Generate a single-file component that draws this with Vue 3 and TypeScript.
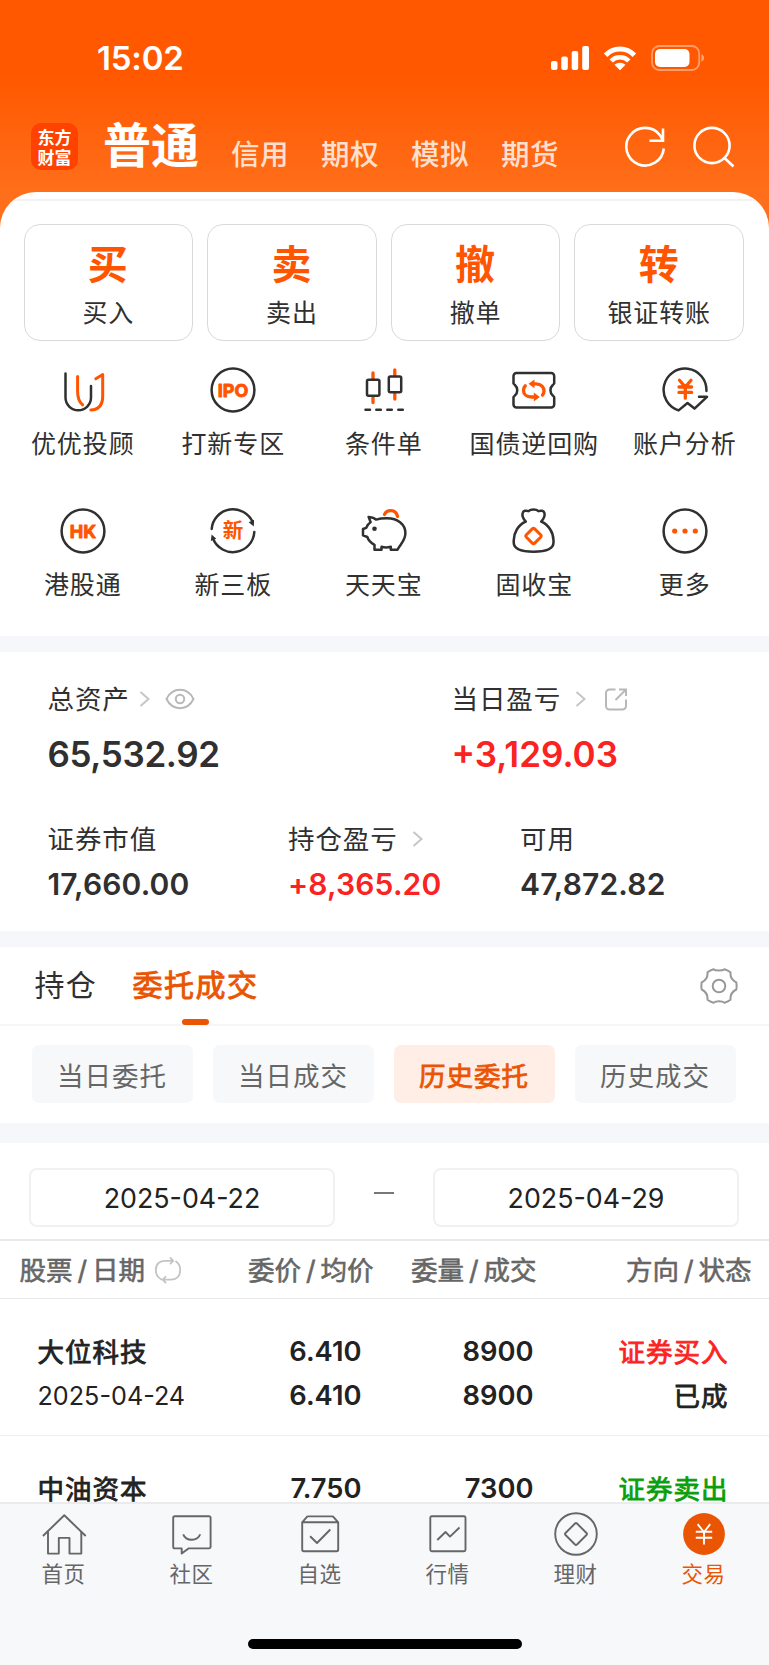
<script setup lang="ts">
type Tone = 'ink' | 'hot' | 'hotfill' | 'inkfill' | 'bold'
interface Shape { d: string; tone: Tone }
interface Tool { label: string; shapes: Shape[]; text?: string; textClass?: string }
interface Tab { label: string; shapes: string[]; active?: boolean }
interface Order {
  name: string; date?: string; price: string; avg?: string
  qty: string; filled?: string; side: string; status?: string; tone: 'buy' | 'sell'
}

const ring = 'M24 2.6a21.4 21.4 0 1 1 0 42.8a21.4 21.4 0 1 1 0-42.8z'

const markets: string[] = ['信用', '期权', '模拟', '期货']

const actions = [
  { mark: '买', label: '买入' },
  { mark: '卖', label: '卖出' },
  { mark: '撤', label: '撤单' },
  { mark: '转', label: '银证转账' },
]

const tools: Tool[] = [
  {
    label: '优优投顾',
    shapes: [
      { d: 'M6.5 7.5V31.5A12.7 12.7 0 0 0 32 31.5V20', tone: 'ink' },
      { d: 'M18.6 10.5V25C18.6 32 20 36 23.6 38.8', tone: 'hot' },
      { d: 'M36.8 12.8L43.7 8.5V30C43.7 39 40 43.8 31.8 44', tone: 'hot' },
    ],
  },
  { label: '打新专区', shapes: [{ d: ring, tone: 'ink' }], text: 'IPO', textClass: 'latin' },
  {
    label: '条件单',
    shapes: [
      { d: 'M13 7V13M13 31V36.5M34.8 3.8V9.5M34.8 27V33', tone: 'bold' },
      { d: 'M8.5 13.8H17.9A1.5 1.5 0 0 1 19.4 15.3V28.2A1.5 1.5 0 0 1 17.9 29.7H8.5A1.5 1.5 0 0 1 7 28.2V15.3A1.5 1.5 0 0 1 8.5 13.8Z', tone: 'ink' },
      { d: 'M30.3 10.4H39.7A1.5 1.5 0 0 1 41.2 11.9V24.8A1.5 1.5 0 0 1 39.7 26.3H30.3A1.5 1.5 0 0 1 28.8 24.8V11.9A1.5 1.5 0 0 1 30.3 10.4Z', tone: 'ink' },
      { d: 'M5.5 43.8H10M16.3 43.8H20.8M27.3 43.8H31.8M38.3 43.8H42.8', tone: 'ink' },
    ],
  },
  {
    label: '国债逆回购',
    shapes: [
      { d: 'M6.5 7H41.2A3 3 0 0 1 44.2 10V17.5L42.8 19A7 7 0 0 0 42.8 29.5L44.2 31V38.5A3 3 0 0 1 41.2 41.5H6.5A3 3 0 0 1 3.5 38.5V31L4.9 29.5A7 7 0 0 0 4.9 19L3.5 17.5V10A3 3 0 0 1 6.5 7Z', tone: 'ink' },
      { d: 'M22 17.8H26C31.5 17.8 34 21.5 34 24.8C34 26.5 33.5 28 32.5 29M26 31H21.5C16.5 31 13.5 28 13.5 24.5C13.5 22.5 14 21 15.3 19.8', tone: 'bold' },
      { d: 'M18.5 17.8L24.5 13.4V22.2ZM29.8 31L23.8 26.6V35.4Z', tone: 'hotfill' },
    ],
  },
  {
    label: '账户分析',
    shapes: [
      { d: 'M45.4 25A21.4 21.4 0 1 0 17.6 44.4L26.5 37L33.5 42.6L46 30.8H38', tone: 'ink' },
      { d: 'M18.5 14.2L24.3 21L30 14.2M24.3 21V32.2M18 21H30.6M18 26.4H30.6', tone: 'bold' },
    ],
  },
  { label: '港股通', shapes: [{ d: ring, tone: 'ink' }], text: 'HK', textClass: 'latin' },
  {
    label: '新三板',
    shapes: [
      { d: 'M2.7 22A21.4 21.4 0 0 1 43.8 15.5M45.3 25A21.4 21.4 0 0 1 4.2 32', tone: 'ink' },
      { d: 'M39.7 15.2L45 12.8L44.8 19.5ZM7.3 31.8L1.8 34L2.6 27.5Z', tone: 'inkfill' },
    ],
    text: '新', textClass: 'han',
  },
  {
    label: '天天宝',
    shapes: [
      { d: 'M8.6 9.9C11 10.2 14 10.5 16 12.6C20 11.3 23 11.2 27 11.2C38 11.2 45.4 17.5 45.4 26C45.4 34 40 37.5 37.5 42.7H30.8V39.8C27.5 40.8 24.5 40.8 21.5 39.8V42.7H14.5V37.8C11 36 8.5 33.5 7.3 30L3 28.3V22L6.2 20.8C7 18 8.5 16.5 10.6 15.2Z', tone: 'ink' },
      { d: 'M24.5 7.5C26.5 2.5 35.8 1.5 37.6 9.5', tone: 'bold' },
      { d: 'M14.5 19.4a2.3 2.3 0 1 1 0 4.6a2.3 2.3 0 1 1 0-4.6z', tone: 'inkfill' },
    ],
  },
  {
    label: '固收宝',
    shapes: [
      { d: 'M15.8 14.5C8 18 3.7 26 3.7 33.5V35.5C3.7 42 10 44.7 23.5 44.7S43.5 42 43.5 35.5V33.5C43.5 26 39 18 31.2 14.5C34 11.5 35 8 34.4 5.8C33.7 3.7 31 3.2 28.5 4.2C26.5 1.9 20.5 1.9 18.5 4.2C16 3.2 13.3 3.7 12.7 5.8C12 8 13 11.5 15.8 14.5Z', tone: 'ink' },
      { d: 'M22.3 21.9Q23.5 20.8 24.7 21.9L30.6 27.8Q31.7 29 30.6 30.2L24.7 36.1Q23.5 37.2 22.3 36.1L16.4 30.2Q15.3 29 16.4 27.8Z', tone: 'hot' },
    ],
  },
  {
    label: '更多',
    shapes: [
      { d: ring, tone: 'ink' },
      { d: 'M13.7 21.4a2.6 2.6 0 1 1 0 5.2a2.6 2.6 0 1 1 0-5.2zM24 21.4a2.6 2.6 0 1 1 0 5.2a2.6 2.6 0 1 1 0-5.2zM34.3 21.4a2.6 2.6 0 1 1 0 5.2a2.6 2.6 0 1 1 0-5.2z', tone: 'hotfill' },
    ],
  },
]

const views = [
  { label: '当日委托', on: false },
  { label: '当日成交', on: false },
  { label: '历史委托', on: true },
  { label: '历史成交', on: false },
]

const headings: [string, string][] = [['股票', '日期'], ['委价', '均价'], ['委量', '成交'], ['方向', '状态']]

const orders: Order[] = [
  { name: '大位科技', date: '2025-04-24', price: '6.410', avg: '6.410', qty: '8900', filled: '8900', side: '证券买入', status: '已成', tone: 'buy' },
  { name: '中油资本', price: '7.750', qty: '7300', side: '证券卖出', tone: 'sell' },
]

const tabs: Tab[] = [
  { label: '首页', shapes: ['M2.9 26L24.3 5.3L45.7 26', 'M8 21.5V43.6H18.8V27.9H29.5V43.6H41.3V21.5'] },
  { label: '社区', shapes: ['M6.8 6.2H41A1.6 1.6 0 0 1 42.6 7.8V36.8A1.6 1.6 0 0 1 41 38.4H20.5L13.7 43.6V38.4H6.8A1.6 1.6 0 0 1 5.2 36.8V7.8A1.6 1.6 0 0 1 6.8 6.2Z', 'M15.2 24.3C18 31.5 29.6 31.5 32.2 24.3'] },
  { label: '自选', shapes: ['M6.2 12.3H42.2V39.5A1.7 1.7 0 0 1 40.5 41.2H7.9A1.7 1.7 0 0 1 6.2 39.5ZL10.5 7.3Q11 6.4 12.2 6.4H36Q37.2 6.4 37.8 7.3L42.2 12.3', 'M14.1 26.2L21 33L34.3 19.5'] },
  { label: '行情', shapes: ['M7.8 6.3H40A1.5 1.5 0 0 1 41.5 7.8V39.8A1.5 1.5 0 0 1 40 41.3H7.8A1.5 1.5 0 0 1 6.3 39.8V7.8A1.5 1.5 0 0 1 7.8 6.3Z', 'M13.3 30L21.5 22L26 26.6L35.5 17.5'] },
  { label: '理财', shapes: ['M24 3.2a20.8 20.8 0 1 1 0 41.6a20.8 20.8 0 1 1 0-41.6z', 'M23 13.5Q24 12.6 25 13.5L34.5 23Q35.4 24 34.5 25L25 34.5Q24 35.4 23 34.5L13.5 25Q12.6 24 13.5 23Z'] },
  { label: '交易', shapes: ['M17.6 14.2L24 22L30.2 14.2M24 22V34.6M15.8 21.8H32.2M15.8 27.7H32.2'], active: true },
]
</script>

<template>
  <div class="app">
    <header>
      <div class="status">
        <span class="clock">15:02</span>
        <div class="signals">
          <svg class="bars" width="38" height="24" viewBox="0 0 38 24">
            <rect x="0" y="15" width="6.5" height="9" rx="2" />
            <rect x="10.3" y="10.5" width="6.5" height="13.5" rx="2" />
            <rect x="20.7" y="5" width="6.5" height="19" rx="2" />
            <rect x="31.2" y="0" width="6.8" height="24" rx="2" />
          </svg>
          <svg class="wifi" width="34" height="24" viewBox="0 0 34 24">
            <path d="M2.6 9.3C10.5 1 23.5 1 31.4 9.3" stroke-width="5" />
            <path d="M8.2 15C13 10 21 10 25.8 15" stroke-width="4.6" />
            <path class="dot" d="M11.5 18.800C14.5 16 19.5 16 22.5 18.8L17 24.3Z" />
          </svg>
          <svg class="battery" width="54" height="26" viewBox="0 0 54 26">
            <rect class="shell" x="1" y="1" width="47.2" height="24" rx="7.5" />
            <rect x="4" y="4" width="34.5" height="18" rx="5" />
            <path class="nub" d="M50.3 9.3C54 10.5 54 15.5 50.3 16.7Z" />
          </svg>
        </div>
      </div>
      <nav class="markets">
        <div class="logo"><span>东方</span><span>财富</span></div>
        <strong>普通</strong>
        <span v-for="m in markets" :key="m" class="market">{{ m }}</span>
        <svg class="head-icons" width="112" height="48" viewBox="0 0 112 48">
          <path d="M40.8 25.5A18.8 18.8 0 1 1 37.2 12.5L40 17.2M26.5 17.7H40V5.5" />
          <circle cx="89" cy="22.5" r="17.6" />
          <path d="M101.5 35L110.5 43.5" />
        </svg>
      </nav>
    </header>

    <main>
      <div class="seam"></div>
      <section class="actions">
        <button v-for="a in actions" :key="a.mark" type="button">
          <b>{{ a.mark }}</b><span>{{ a.label }}</span>
        </button>
      </section>

      <section class="tools">
        <div v-for="t in tools" :key="t.label" class="tool">
          <svg width="48" height="48" viewBox="0 0 48 48">
            <path v-for="(s, i) in t.shapes" :key="i" :d="s.d" :class="s.tone" />
            <text v-if="t.text" x="24" :y="t.textClass === 'han' ? 31.4 : 30.7" :class="t.textClass">{{ t.text }}</text>
          </svg>
          <span>{{ t.label }}</span>
        </div>
      </section>

      <section class="assets">
        <div class="pair big">
          <div>
            <div class="label">总资产
              <svg class="chev" width="12" height="18" viewBox="0 0 12 18"><path d="M1.5 2L9.5 9L1.5 16" /></svg>
              <svg class="eye" width="30" height="22" viewBox="0 0 30 22">
                <path d="M1.5 11C7.5-1.2 22.5-1.2 28.5 11C22.5 23.2 7.5 23.2 1.5 11Z" /><circle cx="15" cy="11" r="4.2" />
              </svg>
            </div>
            <div class="value total">65,532.92</div>
          </div>
          <div>
            <div class="label">当日盈亏
              <svg class="chev wide" width="12" height="18" viewBox="0 0 12 18"><path d="M1.5 2L9.5 9L1.5 16" /></svg>
              <svg class="share" width="24" height="24" viewBox="0 0 24 24">
                <path d="M11.5 2.5H5.5A3.5 3.5 0 0 0 2 6V19A3.5 3.5 0 0 0 5.5 22.5H18.5A3.5 3.5 0 0 0 22 19V12.5M15 2.5H22V9M22 2.5L11.5 13" />
              </svg>
            </div>
            <div class="value rise">+3,129.03</div>
          </div>
        </div>
        <div class="pair small">
          <div><div class="label">证券市值</div><div class="value">17,660.00</div></div>
          <div>
            <div class="label">持仓盈亏
              <svg class="chev wide" width="12" height="18" viewBox="0 0 12 18"><path d="M1.5 2L9.5 9L1.5 16" /></svg>
            </div>
            <div class="value rise">+8,365.20</div>
          </div>
          <div><div class="label">可用</div><div class="value">47,872.82</div></div>
        </div>
      </section>

      <section class="book">
        <div class="book-tabs">
          <span class="plain">持仓</span>
          <span class="chosen">委托成交</span>
          <svg class="gear" width="38" height="38" viewBox="0 0 38 38">
            <path d="M19 3.6C21.5 3.6 23.5 3.2 24.5 2.2Q28.2 3.4 30.5 5.2C30 10.2 31.8 13.2 36.3 15.5Q37 19 36.3 22.5C31.8 24.8 30 27.8 30.5 32.8Q28.2 34.6 24.5 35.8C22 33.6 16 33.6 13.5 35.8Q9.8 34.6 7.5 32.8C8 27.8 6.2 24.8 1.7 22.5Q1 19 1.7 15.5C6.2 13.2 8 10.2 7.5 5.2Q9.8 3.4 13.5 2.2C14.5 3.2 16.5 3.6 19 3.6Z" />
            <circle cx="19" cy="19" r="6.3" />
          </svg>
        </div>
        <div class="views">
          <button v-for="v in views" :key="v.label" type="button" :class="{ on: v.on }">{{ v.label }}</button>
        </div>
      </section>

      <section class="history">
        <div class="range">
          <div class="date">2025-04-22</div><i></i><div class="date">2025-04-29</div>
        </div>
        <div class="heads">
          <div v-for="(h, i) in headings" :key="h[0]">
            {{ h[0] }}<em>/</em>{{ h[1] }}
            <svg v-if="i === 0" width="28" height="28" viewBox="0 0 28 28">
              <path d="M7.5 23.5C3.5 21.5 1.8 18 1.8 14C1.8 7.5 6 4.8 11 4.8H18M16.5 2L19.3 4.8L16.5 7.6M22 5.5C25 7.5 26.2 10.5 26.2 14C26.2 20.5 22 23.7 17 23.7H9.5M11.5 20.8L8.7 23.7L11.5 26.5" />
            </svg>
          </div>
        </div>
        <div v-for="o in orders" :key="o.name" class="order">
          <div><b class="cjk">{{ o.name }}</b><span v-if="o.date" class="day">{{ o.date }}</span></div>
          <div><b>{{ o.price }}</b><b v-if="o.avg">{{ o.avg }}</b></div>
          <div><b>{{ o.qty }}</b><b v-if="o.filled">{{ o.filled }}</b></div>
          <div><b class="cjk" :class="o.tone">{{ o.side }}</b><b v-if="o.status" class="cjk">{{ o.status }}</b></div>
        </div>
      </section>
    </main>

    <footer>
      <div class="tabs">
        <div v-for="t in tabs" :key="t.label" class="tab" :class="{ active: t.active }">
          <svg width="48" height="48" viewBox="0 0 48 48">
            <circle v-if="t.active" cx="24" cy="24" r="20.9" class="disc" />
            <path v-for="d in t.shapes" :key="d" :d="d" />
          </svg>
          <span>{{ t.label }}</span>
        </div>
      </div>
      <div class="home-bar"></div>
    </footer>
  </div>
</template>

<style>
body { margin: 0; }
</style>

<style scoped>
.app {
  width: 769px; height: 1665px; overflow: hidden; box-sizing: border-box;
  display: flex; flex-direction: column;
  font-family: Inter, "Noto Sans CJK SC", sans-serif; color: #303030;
  background: linear-gradient(#ff5800 0, #ff5800 75px, #ff6e1a 190px, #ff6e1a 240px, #fff 240px);
}
svg { display: block; flex: none; fill: none; stroke-linecap: round; stroke-linejoin: round; }
button { font: inherit; padding: 0; margin: 0; border: 0; box-sizing: border-box; }
header { height: 191.5px; flex: none; }
.status { height: 115px; display: flex; align-items: center; justify-content: space-between; padding: 0 64.5px 0 97px; box-sizing: border-box; }
.clock { font-size: 33px; font-weight: 600; color: #fff; line-height: 40px; letter-spacing: -.2px; }
.signals { display: flex; align-items: center; }
.signals svg { fill: #fff; }
.wifi { margin: 0 14px; }
.signals .wifi path { fill: none; stroke: #fff; stroke-linecap: butt; }
.signals .wifi .dot { fill: #fff; stroke: none; }
.battery .shell { fill: none; stroke: #fff; stroke-opacity: .42; stroke-width: 1.8; }
.battery .nub { fill-opacity: .45; }

.markets { height: 76px; display: flex; padding-left: 31px; color: #fff; }
.logo {
  width: 47px; height: 47px; margin-top: 8px; border-radius: 10px; background: #ff4200;
  display: flex; flex-direction: column; align-items: center; justify-content: center;
  font: 700 17px/20px "Noto Sans CJK SC", sans-serif;
}
.markets strong { font-size: 48px; line-height: 60px; margin: 1px 32px 0 25px; font-weight: 700; width: 96px; }
.market { width: 90px; font-size: 28.5px; line-height: 40px; padding-top: 20px; color: #ffe0d0; font-weight: 500; letter-spacing: .5px; }
.head-icons { margin: 8px 0 0 32px; stroke: #fff; stroke-width: 2.6; stroke-linecap: butt; stroke-linejoin: miter; }

main { flex: 1; min-height: 0; overflow: hidden; background: #fff; border-radius: 36px 36px 0 0; }
.seam { height: 2px; margin-top: 7.5px; background: #f2f2f2; }
.actions { display: flex; gap: 14px; padding: 23px 25px 0 23.5px; }
.actions button {
  flex: 1; height: 117px; border: 1px solid #d9d9d9; border-radius: 16px; background: #fff;
  display: flex; flex-direction: column; align-items: center; color: #303030;
}
.actions b { font-size: 40px; line-height: 44px; margin: 18px 1px 0 0; color: #ff5500; font-weight: 700; }
.actions span { font-size: 25px; line-height: 30px; margin-top: 11px; letter-spacing: .9px; }

.tools { display: grid; grid-template-columns: repeat(5, 150.5px); grid-auto-rows: 141px; padding: 25px 7.5px 0; height: 295px; box-sizing: border-box; }
.tool { display: flex; flex-direction: column; align-items: center; }
.tool span { font-size: 25px; line-height: 30px; margin-top: 15px; letter-spacing: .9px; white-space: nowrap; }
.ink { stroke: #303030; stroke-width: 2.5; }
.hot { stroke: #ff5500; stroke-width: 3; }
.bold { stroke: #ff5500; stroke-width: 3.3; }
.hotfill { fill: #ff5500; }
.inkfill { fill: #303030; }
.tool text { fill: #ff5500; text-anchor: middle; }
.tool .latin { font: 700 18px Inter, sans-serif; stroke: #ff5500; stroke-width: .9; }
.tool .han { font: 700 20.5px "Noto Sans CJK SC", sans-serif; }

.assets { border-top: 16px solid #f5f7fa; height: 295px; box-sizing: border-box; padding: 30px 0 0 47.5px; }
.pair { display: flex; }
.label { display: flex; align-items: center; font-size: 26.5px; line-height: 34px; letter-spacing: .9px; }
.chev { margin-left: 9px; stroke: #c6c6c6; stroke-width: 2; stroke-linecap: butt; stroke-linejoin: miter; }
.chev.wide { margin-left: 14px; }
.eye { margin-left: 14px; stroke: #b8b8b8; stroke-width: 2; }
.share { margin-left: 17px; stroke: #b8b8b8; stroke-width: 2; stroke-linecap: butt; stroke-linejoin: miter; }
.value { font-weight: 600; white-space: nowrap; }
.rise { color: #fb2222; }
.big > div { width: 404px; flex: none; }
.big .value { font-size: 35px; line-height: 42px; margin-top: 17px; }
.big .total { letter-spacing: -.35px; }
.small { margin-top: 47px; }
.small .value { font-size: 30px; line-height: 36px; margin-top: 10px; letter-spacing: .15px; }
.small > div { width: 240.5px; flex: none; }
.small > div:nth-child(2) { width: 232px; }

.book { border-top: 16px solid #f5f7fa; height: 192px; box-sizing: border-box; }
.book-tabs { height: 79px; box-sizing: border-box; display: flex; align-items: center; padding: 0 31px 0 34.5px; border-bottom: 2px solid #f6f6f6; font-size: 30px; letter-spacing: 1.2px; }
.chosen { margin-left: 35.5px; height: 79px; line-height: 78px; position: relative; color: #ea5504; -webkit-text-stroke: .9px; letter-spacing: 1.5px; }
.plain { line-height: 78px; height: 79px; }
.chosen::after { content: ""; position: absolute; left: 50%; bottom: 0; width: 27px; height: 6px; margin-left: -13.5px; border-radius: 3px; background: #ea5504; }
.gear { margin-left: auto; stroke: #999; stroke-width: 2; }
.views { display: flex; gap: 20px; padding: 19px 33px 0 32px; }
.views button { flex: 1; height: 58px; border-radius: 7px; background: #f7f8fa; color: #666; font-size: 26.5px; letter-spacing: 1px; padding-right: 1px; }
.views .on { background: #ffeee5; color: #ea5504; -webkit-text-stroke: .8px; }

.history { border-top: 20px solid #f5f7fa; }
.range { height: 98px; box-sizing: border-box; padding: 25px 30px 0 29px; display: flex; justify-content: space-between; border-bottom: 2px solid #e8e8e8; }
.date { width: 306px; height: 59px; box-sizing: border-box; border: 2px solid #f1f1f1; border-radius: 8px; text-align: center; font-size: 26.8px; line-height: 56px; color: #222; }
.range i { width: 20px; height: 2px; margin-top: 24px; background: #777; }
.heads { height: 58px; box-sizing: border-box; border-bottom: 1px solid #e8e8e8; display: grid; grid-template-columns: 200px 154px 163px 215px; padding-left: 19.5px; align-items: center; font-size: 26.5px; line-height: 40px; color: #666; -webkit-text-stroke: .6px; white-space: nowrap; }
.heads div { display: flex; align-items: center; justify-content: flex-end; }
.heads div:first-child { justify-content: flex-start; }
.heads em { font-style: normal; width: 19.5px; text-align: center; }
.heads svg { margin-left: 9px; stroke: #c4c4c4; stroke-width: 1.8; }
.order { height: 137px; box-sizing: border-box; padding: 31px 0 0 37.5px; border-bottom: 1px solid #efefef; display: grid; grid-template-columns: 200px 124px 172px 194px; font-size: 27.3px; color: #222; }
.order div { display: flex; flex-direction: column; align-items: flex-end; }
.order div:first-child { align-items: flex-start; }
.order b, .day { line-height: 44px; height: 44px; font-weight: 600; white-space: nowrap; }
.order .cjk { font-size: 26.5px; font-weight: 400; letter-spacing: 1px; margin-right: -1px; -webkit-text-stroke: .8px; }
.order .day { font-weight: 400; font-size: 25.2px; }
.order .buy { color: #fb2222; }
.order .sell { color: #0a9e0a; }

footer { height: 163px; flex: none; box-sizing: border-box; border-top: 2px solid #ebebee; background: #f7f8fa; }
.tabs { display: flex; padding: 6px 0 0; }
.tab { width: 128px; display: flex; flex-direction: column; align-items: center; color: #666; }
.tab svg { stroke: #666; stroke-width: 1.9; stroke-linecap: butt; }
.tab.active svg { stroke: #fff; }
.tab .disc { fill: #ea5504; stroke: none; }
.tab span { font-size: 21.5px; line-height: 28px; margin: 2px 1px 0 0; letter-spacing: .4px; }
.tab.active { color: #ea5504; }
.home-bar { width: 274px; height: 10px; border-radius: 5px; background: #000; margin: 51px auto 0; }
</style>
